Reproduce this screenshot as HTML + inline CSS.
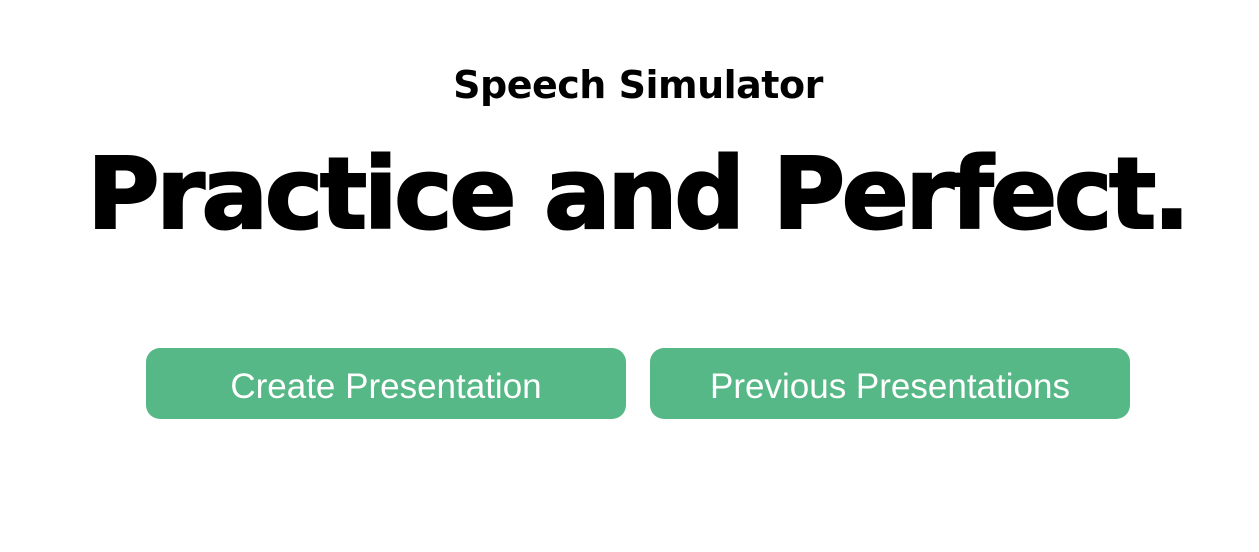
<!DOCTYPE html>
<html><head><meta charset="utf-8"><style>
html,body{margin:0;padding:0;background:#fff;width:1259px;height:552px;overflow:hidden}
body{position:relative;font-family:"DejaVu Sans","Liberation Sans",sans-serif;color:#000}
.t1{position:absolute;left:0;width:1276px;top:60px;text-align:center;font-weight:bold;font-size:38px;line-height:50px;letter-spacing:-0.5px}
.t2{position:absolute;left:0;width:1274px;top:135px;text-align:center;font-weight:bold;font-size:99px;line-height:120px;letter-spacing:-3.5px;white-space:nowrap;-webkit-text-stroke:2px #000}
.b{position:absolute;top:348px;width:480px;height:71px;background:#55b886;border-radius:14px;color:#fff;font-family:"Liberation Sans",sans-serif;font-size:35px;line-height:77px;text-align:center}
</style></head><body>
<div class="t1">Speech Simulator</div>
<div class="t2">Practice and Perfect.</div>
<div class="b" style="left:146px">Create Presentation</div>
<div class="b" style="left:650px">Previous Presentations</div>
</body></html>
